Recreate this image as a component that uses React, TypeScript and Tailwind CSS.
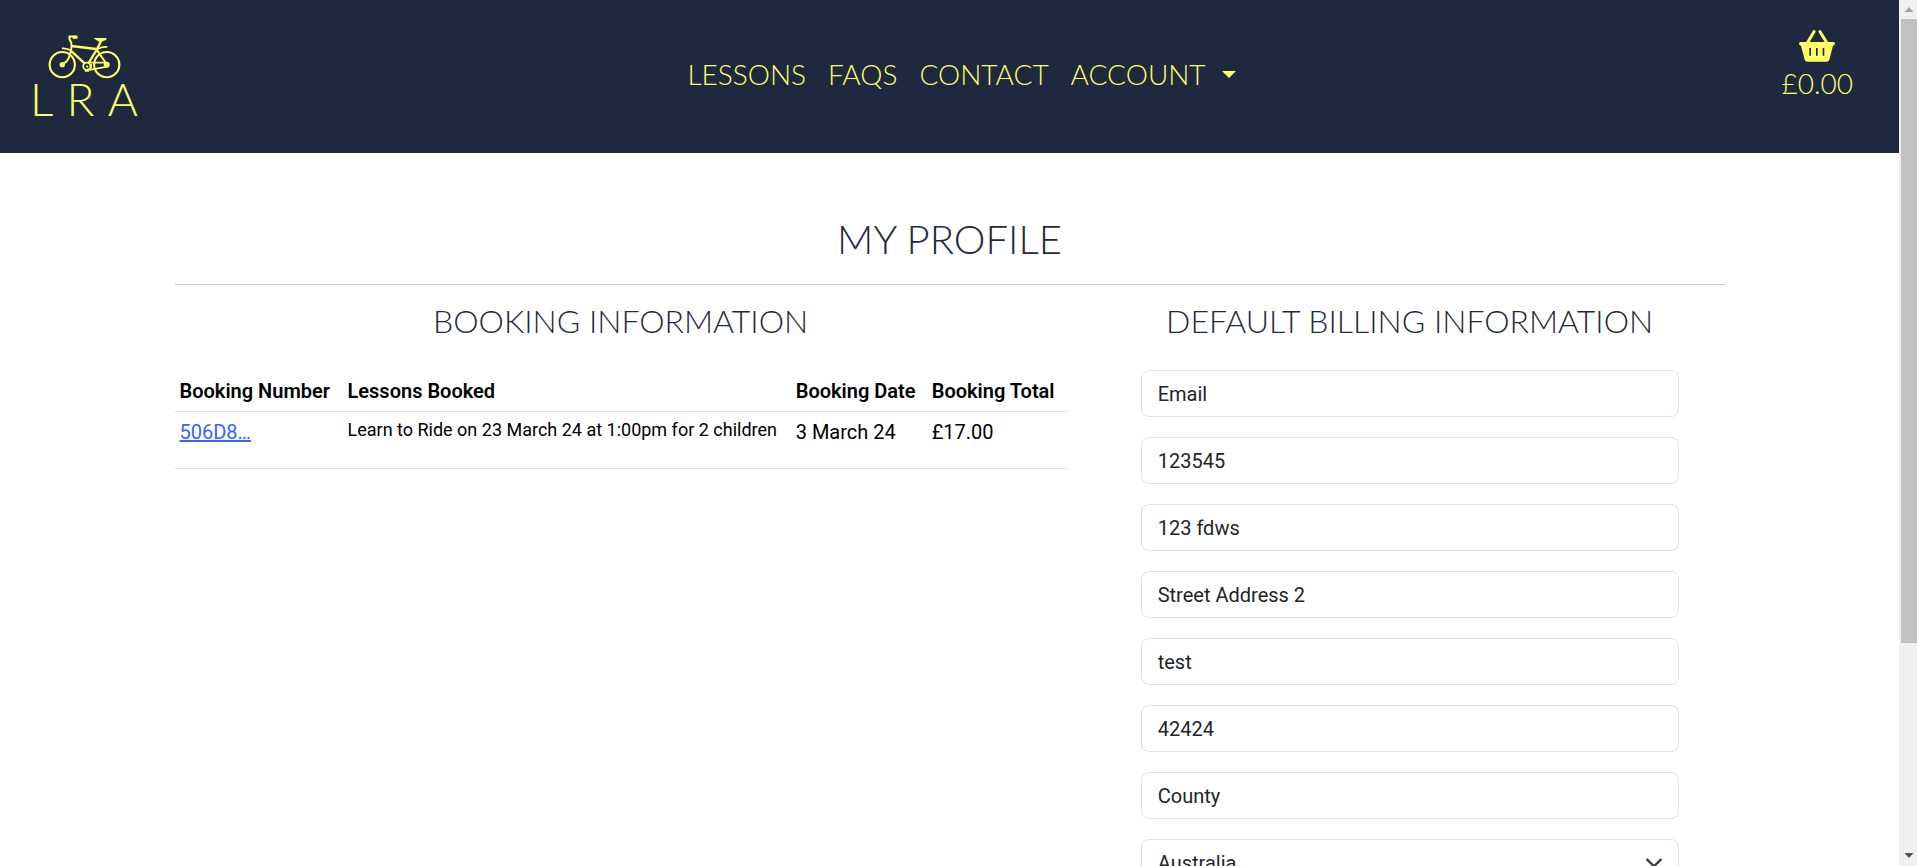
import React from "react";

const navLinks = ["LESSONS", "FAQS", "CONTACT"];

const billingFields = [
  { id: "email", label: "Email", value: "" },
  { id: "phone", label: "Phone Number", value: "123545" },
  { id: "street1", label: "Street Address 1", value: "123 fdws" },
  { id: "street2", label: "Street Address 2", value: "" },
  { id: "town", label: "Town or City", value: "test" },
  { id: "postcode", label: "Postcode", value: "42424" },
  { id: "county", label: "County", value: "" },
];

function Bicycle() {
  return (
    <svg viewBox="145 102 220 135" className="h-[45px] w-[73px]" fill="none" stroke="currentColor" aria-hidden="true">
      <g strokeWidth="6.5">
        <circle cx="188" cy="194" r="38" />
        <circle cx="322" cy="194" r="38" />
      </g>
      <circle cx="188" cy="194" r="8" fill="currentColor" stroke="none" />
      <circle cx="322" cy="194" r="9" fill="currentColor" stroke="none" />
      <path d="M231 109 H210 Q207 117 215 127 L216 139 Q212 171 202 183 L190 193" strokeWidth="6" />
      <path d="M215 138 L290 147" strokeWidth="7.500" />
      <path d="M212 150 L256 191" strokeWidth="7" />
      <path d="M305 123 L293 147 L268 188" strokeWidth="7" />
      <path d="M291 148 L320 190" strokeWidth="6" />
      <path d="M265 188 H320 M270 210 L324 200" strokeWidth="5" />
      <path d="M282 114 H321 V119 L309 124 H297 Z" fill="currentColor" stroke="none" />
      <path d="M219 107 H234 V115 L220 117 Z" fill="currentColor" stroke="none" />
      <path d="M187 145 Q200 144 211 150 M295 147 Q309 139 324 141" strokeWidth="5" />
      <circle cx="262" cy="199" r="11" strokeWidth="5.500" />
      <circle cx="263" cy="200" r="3.500" fill="currentColor" stroke="none" />
      <path d="M256 213 H269 M275 192 V206" strokeWidth="5" />
    </svg>
  );
}

function Basket() {
  return (
    <svg viewBox="176 88 108 96" className="h-8 w-9" fill="none" stroke="currentColor" aria-hidden="true">
      <path d="M221 93 L201 127 M239 93 L260 127" strokeWidth="9" strokeLinecap="round" />
      <path
        fillRule="evenodd"
        fill="currentColor"
        stroke="none"
        d="M180 124 H280 Q284 124 284 129 Q284 134 278 135 L267 177 Q265 183 259 183 H202 Q195 183 193 177 L182 135 Q176 134 176 129 Q176 124 180 124 Z M207 142 V165 H212 V142 Z M227 142 V165 H232 V142 Z M247 142 V165 H252 V142 Z"
      />
    </svg>
  );
}

function Header() {
  return (
    <header className="grid h-[153px] shrink-0 grid-cols-[1fr_auto_1fr] items-start bg-[#1e2940] px-[30px] font-['Lato',sans-serif] font-light text-[#ffff66]">
      <a href="#home" aria-label="LRA home" className="flex w-[108px] flex-col items-center pt-[34px]">
        <Bicycle />
        <span className="flex w-full justify-between text-[46px] leading-10">
          <span>L</span>
          <span>R</span>
          <span>A</span>
        </span>
      </a>
      <nav className="ml-6 flex items-center gap-[22px] pt-14 text-[28px] leading-9">
        {navLinks.map((link) => (
          <a key={link} href={`#${link.toLowerCase()}`}>
            {link}
          </a>
        ))}
        <button type="button" className="flex items-center gap-4">
          ACCOUNT
          <svg viewBox="0 0 14 7" className="h-[7px] w-3.5" fill="currentColor" aria-hidden="true">
            <path d="M0 0H14L7 7Z" />
          </svg>
        </button>
      </nav>
      <a href="#basket" className="mr-4 flex flex-col items-center justify-self-end pt-[30px] text-[28px] leading-9">
        <Basket />
        <span className="pt-[3px]">£0.00</span>
      </a>
    </header>
  );
}

function Bookings() {
  return (
    <section>
      <h2 className="text-center font-['Lato',sans-serif] text-[32px] leading-10 font-light text-[#1e2940]">
        BOOKING INFORMATION
      </h2>
      <table className="mt-[30px] w-full text-left text-xl leading-[30px] text-black">
        <thead>
          <tr className="border-b border-[#dee2e6]">
            <th className="w-[168px] p-[5px] font-semibold">Booking Number</th>
            <th className="p-[5px] font-semibold">Lessons Booked</th>
            <th className="w-[136px] p-[5px] font-semibold">Booking Date</th>
            <th className="w-[140px] p-[5px] font-semibold">Booking Total</th>
          </tr>
        </thead>
        <tbody>
          <tr className="border-b border-[#dee2e6] align-top">
            <td className="p-[5px]">
              <a href="#booking" className="text-[#3366ff] underline">506D8…</a>
            </td>
            <td className="p-[5px]">
              <ul className="mb-5 text-lg leading-[26px]">
                <li>Learn to Ride on 23 March 24 at 1:00pm for 2 children</li>
              </ul>
            </td>
            <td className="p-[5px]">3 March 24</td>
            <td className="p-[5px]">£17.00</td>
          </tr>
        </tbody>
      </table>
    </section>
  );
}

function BillingForm() {
  const box =
    "h-[47px] w-full rounded-lg border border-[#dee2e6] bg-white px-4 text-xl text-[#212529] placeholder:text-[#212529]";
  return (
    <section>
      <h2 className="text-center font-['Lato',sans-serif] text-[32px] leading-10 font-light text-[#1e2940]">
        DEFAULT BILLING INFORMATION
      </h2>
      <form className="mt-[29px] flex flex-col gap-5 px-[46px] pb-16">
        {billingFields.map((field) => (
          <input
            key={field.id}
            id={field.id}
            aria-label={field.label}
            placeholder={field.label}
            defaultValue={field.value}
            className={box}
          />
        ))}
        <div className="grid items-center">
          <select aria-label="Country" defaultValue="Australia" className={`${box} col-start-1 row-start-1 appearance-none`}>
            <option>Australia</option>
            <option>United Kingdom</option>
          </select>
          <svg viewBox="0 0 16 16" className="pointer-events-none col-start-1 row-start-1 mr-4 size-[18px] justify-self-end" fill="none" stroke="#343a40" strokeWidth="2" strokeLinecap="round" strokeLinejoin="round" aria-hidden="true">
            <path d="m2 5 6 6 6-6" />
          </svg>
        </div>
      </form>
    </section>
  );
}

function Scrollbar() {
  return (
    <div className="flex w-[18px] shrink-0 flex-col bg-[#f0f0f0] pl-0.5" aria-hidden="true">
      <svg viewBox="0 0 16 19" className="h-[19px] w-4 shrink-0" fill="#a3a3a3">
        <path d="M3.5 12 8 7l4.500 5Z" />
      </svg>
      <div className="h-[72%] bg-[#c1c1c1]" />
      <svg viewBox="0 0 16 19" className="mt-auto h-[19px] w-4 shrink-0" fill="#505050">
        <path d="M3.500 6 8 11l4.500-5Z" />
      </svg>
    </div>
  );
}

export default function App() {
  return (
    <div className="flex h-screen overflow-hidden bg-white font-['Roboto',sans-serif]">
      <div className="flex min-w-0 flex-1 flex-col overflow-y-auto [scrollbar-width:none]">
        <Header />
        <main className="mx-auto w-full max-w-[1598px] px-6 pt-[62px]">
          <h1 className="text-center font-['Lato',sans-serif] text-[40px] leading-12 font-light text-[#1e2940]">
            MY PROFILE
          </h1>
          <hr className="mt-[21px] border-[#c4c6cf]" />
          <div className="mt-4 grid grid-cols-[17fr_12fr] gap-7">
            <Bookings />
            <BillingForm />
          </div>
        </main>
      </div>
      <Scrollbar />
    </div>
  );
}
